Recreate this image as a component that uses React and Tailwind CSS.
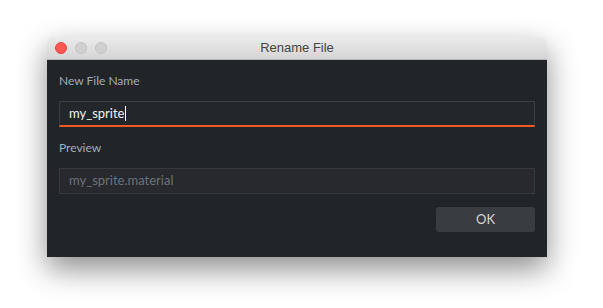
import React from 'react';

const RenameFileDialog = () => {
  return (
    <div className="w-[603px] h-[308px] bg-white pl-[47px] pt-[37px]">
      <div className="w-[500px] rounded-t-[5px] overflow-hidden shadow-[0_12px_30px_rgba(0,0,0,0.45)]">
        {/* title bar */}
        <div className="relative h-[23px] flex items-center justify-center bg-gradient-to-b from-[#ebebeb] to-[#d5d5d5] border-b border-[#b8b8b8]">
          <div className="absolute left-[8px] top-[5px] flex gap-[8px]">
            <span className="w-[12px] h-[12px] rounded-full bg-[#fc5753] border border-[#df4744]" />
            <span className="w-[12px] h-[12px] rounded-full bg-[#d0d0d0] border border-[#c2c2c2]" />
            <span className="w-[12px] h-[12px] rounded-full bg-[#d0d0d0] border border-[#c2c2c2]" />
          </div>
          <span className="text-[13px] text-[#444] font-['Liberation_Sans',sans-serif]">Rename File</span>
        </div>

        {/* body */}
        <div className="bg-[#212429] px-[12px] pt-[13px] pb-[25px] font-['Lato','Open_Sans',sans-serif] text-[13px]">
          <div className="leading-[16px] text-[12px] text-[#a3adb8]">New File Name</div>
          <div className="mt-[12px] h-[26px] flex items-center bg-[#23262b] border border-[#3a3d42] border-b-2 border-b-[#f15a22] pl-[9px]">
            <span className="text-[#f2f2f2]">my_sprite</span>
            <span className="w-px h-[15px] bg-white ml-px" />
          </div>

          <div className="mt-[13px] leading-[16px] text-[12px] text-[#a3adb8]">Preview</div>
          <div className="mt-[12px] h-[26px] flex items-center bg-[#27292e] border border-[#35383d] pl-[9px] text-[#6b727b]">
            my_sprite.material
          </div>

          <div className="mt-[13px] flex justify-end">
            <button className="w-[99px] h-[25px] rounded-[3px] bg-[#393c41] text-[#d4d6d9] text-[13px]">
              OK
            </button>
          </div>
        </div>
      </div>
    </div>
  );
};

export default RenameFileDialog;
